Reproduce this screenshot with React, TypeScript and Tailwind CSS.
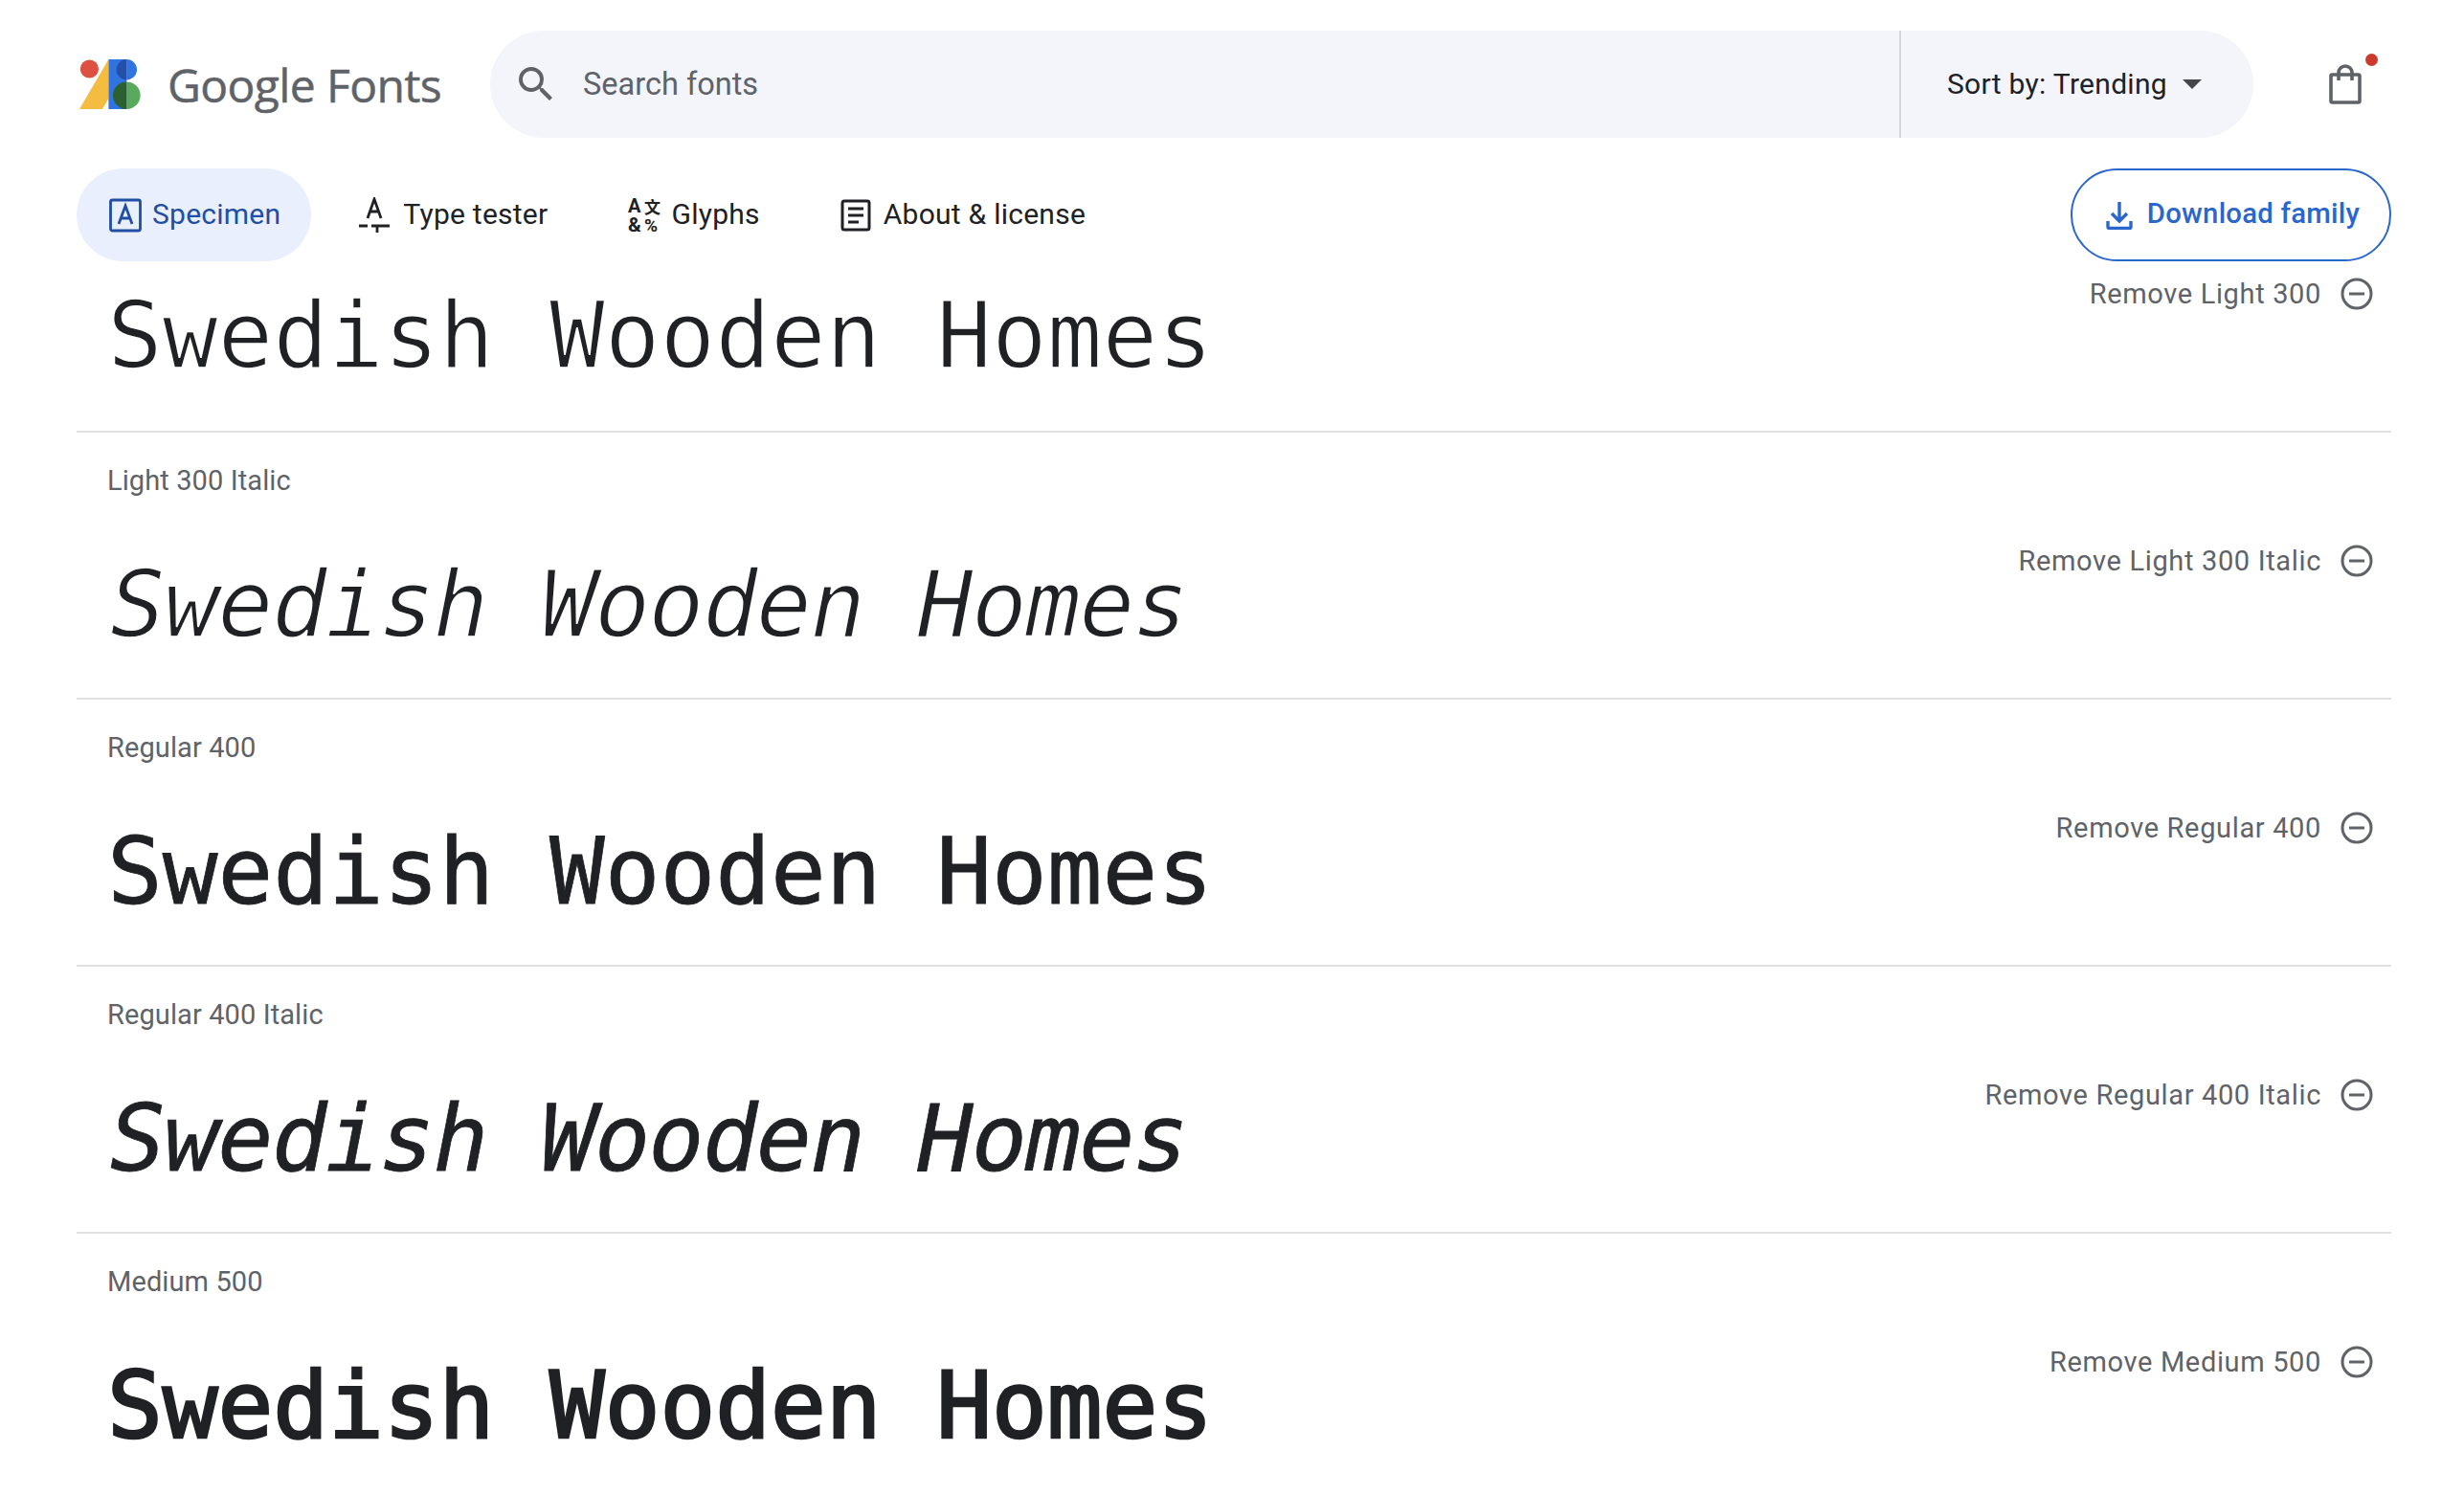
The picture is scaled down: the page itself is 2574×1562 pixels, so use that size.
const sans = "font-['Roboto','Liberation_Sans',sans-serif]";

const rows = [
  { label: 'Light 300 Italic', remove: 'Remove Light 300 Italic', style: 'ml-[3px] italic tracking-[-1.55px] [-webkit-text-stroke:1.6px_#ffffff]' },
  { label: 'Regular 400', remove: 'Remove Regular 400', style: '[-webkit-text-stroke:0.8px_#202124]' },
  { label: 'Regular 400 Italic', remove: 'Remove Regular 400 Italic', style: 'ml-[3px] italic tracking-[-1.55px] [-webkit-text-stroke:0.8px_#202124]' },
  { label: 'Medium 500', remove: 'Remove Medium 500', style: '[-webkit-text-stroke:2.6px_#202124]' },
];

function Logo() {
  return (
    <svg width="64" height="52" viewBox="0 0 64 52">
      <path d="M0 52 L30.4 0 V41 L24 52 Z" fill="#f4bc41" />
      <path d="M30.4 0 H49.3 V52 H30.4 Z" fill="#2f74e0" />
      <circle cx="10.4" cy="10" r="9.6" fill="#de5041" />
      <path d="M49.3 0 A10.7 10.7 0 0 1 49.3 21.4 Z" fill="#2f74e0" />
      <path d="M49.3 0 A10.7 10.7 0 0 0 49.3 21.4 Z" fill="#2350a8" />
      <path d="M49.3 23.4 A14.3 14.3 0 0 1 49.3 52 Z" fill="#5aaa5e" />
      <path d="M49.3 23.4 A14.3 14.3 0 0 0 49.3 52 Z" fill="#2b6131" />
    </svg>
  );
}

function SearchIcon() {
  return (
    <svg width="48" height="48" viewBox="0 0 24 24" fill="#5f6368">
      <path d="M15.5 14h-.79l-.28-.27A6.47 6.47 0 0 0 16 9.5 6.5 6.5 0 1 0 9.5 16c1.61 0 3.09-.59 4.23-1.57l.27.28v.79l5 4.99L20.49 19l-4.99-5zm-6 0C7.01 14 5 11.99 5 9.5S7.01 5 9.5 5 14 7.01 14 9.5 11.99 14 9.5 14z" />
    </svg>
  );
}

function BagIcon() {
  return (
    <svg width="36" height="42" viewBox="0 0 36 42" fill="none" stroke="#5f6368" strokeWidth="3.6">
      <rect x="3" y="11" width="30" height="29" rx="1.5" />
      <path d="M11 17 V9 A7 7 0 0 1 25 9 V17" />
    </svg>
  );
}

function SpecimenIcon() {
  return (
    <svg width="34" height="36" viewBox="0 0 34 36" fill="none" stroke="#1f4ea3" strokeWidth="2.8">
      <rect x="1.5" y="2" width="31" height="32" rx="2" />
      <path d="M10 27 L17 8 L24 27 M12.5 21 H21.5" />
    </svg>
  );
}

function TesterIcon() {
  return (
    <svg width="32" height="38" viewBox="0 0 32 38" fill="none" stroke="#202124" strokeWidth="2.8">
      <path d="M9 22 L16 2 L23 22 M11.5 15 H20.5" />
      <path d="M0 30 H9 M13 30 H32 M19 30 V37" />
    </svg>
  );
}

function GlyphsIcon() {
  return (
    <svg width="34" height="36" viewBox="0 0 34 36" fill="#202124" fontFamily="Roboto, sans-serif" fontWeight="700" className="overflow-visible">
      <text x="0" y="15" fontSize="20">A</text>
      <text x="17" y="16" fontSize="17" fontFamily="Noto Sans CJK SC, sans-serif">文</text>
      <text x="0" y="35" fontSize="21">&amp;</text>
      <text x="17" y="35" fontSize="19">%</text>
    </svg>
  );
}

function AboutIcon() {
  return (
    <svg width="32" height="34" viewBox="0 0 32 34" fill="none" stroke="#202124" strokeWidth="3">
      <rect x="2" y="2" width="28" height="30" rx="2" />
      <path d="M8 10 H24 M8 17 H24 M8 24 H19" />
    </svg>
  );
}

function DownloadIcon() {
  return (
    <svg width="28" height="30" viewBox="0 0 28 30" fill="none" stroke="#2a66cc" strokeWidth="3.4">
      <path d="M14 1 V20 M6 13 L14 21 L22 13" />
      <path d="M2 21 V27 A1.5 1.5 0 0 0 3.5 28.5 H24.5 A1.5 1.5 0 0 0 26 27 V21" />
    </svg>
  );
}

function MinusCircle() {
  return (
    <svg width="34" height="34" viewBox="0 0 34 34" fill="none" stroke="#5f6368" strokeWidth="3">
      <circle cx="17" cy="17" r="15" />
      <path d="M9 17 H25" />
    </svg>
  );
}

function Remove({ text }: { text: string }) {
  return (
    <div className="flex items-center gap-[20px] text-[#5f6368] text-[29px] leading-[34px] tracking-[0.65px]">
      <span>{text}</span>
      <MinusCircle />
    </div>
  );
}

const specimen = "font-['DejaVu_Sans_Mono','Liberation_Mono',monospace] text-[96px] tracking-[-0.05px] leading-[112px] text-[#202124] whitespace-nowrap";

export default function App() {
  return (
    <div className={`h-screen overflow-hidden bg-white pl-[80px] pr-[76px] ${sans}`}>
      <header className="flex items-center h-[112px] mt-[32px]">
        <div className="flex items-center w-[432px] shrink-0">
          <div className="ml-[3px]"><Logo /></div>
          <span className="ml-[28px] mt-[2px] text-[48px] leading-none tracking-[-0.6px] [-webkit-text-stroke:0.5px_#5f6368] text-[#5f6368] font-['Open_Sans',sans-serif]">Google Fonts</span>
        </div>
        <div className="flex items-center flex-1 h-full rounded-full bg-[#f3f5fb]">
          <div className="flex items-center flex-1 h-full pl-[24px] gap-[25px] text-[32.5px] text-[#5f6368]">
            <SearchIcon />
            <span>Search fonts</span>
          </div>
          <div className="flex items-center w-[370px] h-full pl-[48px] gap-[16px] border-l-2 border-[#d5d7db] text-[30px] tracking-[0.3px] text-[#202124]">
            <span className="mb-[2px]">Sort by: Trending</span>
            <svg width="20" height="10" viewBox="0 0 20 10"><path d="M0 0 H20 L10 10 Z" fill="#44474a" /></svg>
          </div>
        </div>
        <div className="relative flex w-[144px] shrink-0 pl-[78px]">
          <BagIcon />
          <span className="absolute right-[14px] top-[-11px] w-[13px] h-[13px] rounded-full bg-[#cb3a2c]" />
        </div>
      </header>

      <nav className="flex items-center justify-between h-[97px] mt-[32px] text-[30px] tracking-[0.25px] text-[#202124]">
        <div className="flex items-center">
          <div className="flex items-center h-[97px] pl-[34px] pr-[32px] gap-[11px] rounded-full bg-[#e9effd] text-[#1f4ea3]">
            <SpecimenIcon />
            <span className="mb-[2px]">Specimen</span>
          </div>
          <div className="flex items-center ml-[50px] gap-[14px]">
            <TesterIcon />
            <span className="mb-[2px]">Type tester</span>
          </div>
          <div className="flex items-center ml-[84px] gap-[11px]">
            <GlyphsIcon />
            <span className="mb-[2px]">Glyphs</span>
          </div>
          <div className="flex items-center ml-[84px] gap-[13px]">
            <AboutIcon />
            <span className="mb-[2px]">About &amp; license</span>
          </div>
        </div>
        <div className="flex items-center h-[97px] pl-[35px] pr-[31px] gap-[15px] rounded-full border-[2.5px] border-[#2a66cc] text-[#2a66cc]">
          <DownloadIcon />
          <span className="mb-[2px] text-[29.3px] font-medium">Download family</span>
        </div>
      </nav>

      <div className="h-[179px] flex justify-between pl-[32px] pr-[19px] border-b-2 border-[#e0e0e0]">
        <div className={`${specimen} mt-[22px] [-webkit-text-stroke:1.6px_#ffffff]`}>Swedish Wooden Homes</div>
        <div className="mt-[17px]"><Remove text="Remove Light 300" /></div>
      </div>

      {rows.map((row) => (
        <div key={row.label} className="h-[279px] pt-[32px] pl-[32px] pr-[19px] border-b-2 border-[#e0e0e0]">
          <div className="text-[29px] tracking-[0.1px] leading-[36px] text-[#5f6368]">{row.label}</div>
          <div className="flex justify-between">
            <div className={`${specimen} mt-[56px] ${row.style}`}>Swedish Wooden Homes</div>
            <div className="mt-[49px]"><Remove text={row.remove} /></div>
          </div>
        </div>
      ))}
    </div>
  );
}
